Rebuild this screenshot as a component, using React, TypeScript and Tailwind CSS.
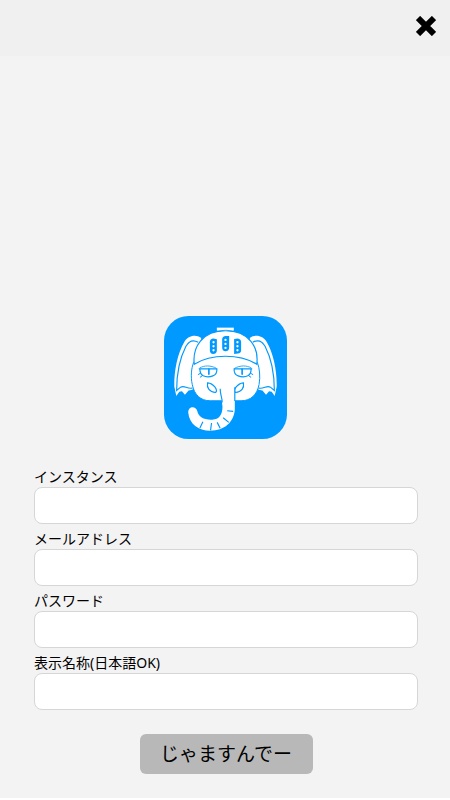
const fields = [
  { id: "instance", label: "インスタンス", type: "text" },
  { id: "email", label: "メールアドレス", type: "email" },
  { id: "password", label: "パスワード", type: "password" },
  { id: "displayName", label: "表示名称(日本語OK)", type: "text" },
];

function ElephantLogo() {
  return (
    <svg viewBox="12 12 370 370" className="w-[123px] h-[123px]" aria-hidden="true">
      <rect x="12" y="12" width="370" height="370" rx="74" fill="#0099ff" />

      {/* Ears */}
      <g id="ear">
        <path
          d="M124 78 C107 66 84 71 73 90 C53 124 42 176 43 224 L49 253 L58 240 L66 238 L75 249 L86 236 L98 234 L108 160 Z"
          fill="#fff"
        />
        <path
          d="M115 91 C99 82 87 87 78 103 C60 138 50 184 50 236 L62 226 C74 219 80 232 97 229"
          fill="none"
          stroke="#0099ff"
          strokeWidth="3.5"
        />
      </g>
      <use href="#ear" transform="translate(394 0) scale(-1 1)" />

      {/* Head */}
      <path
        d="M101 152 C94 169 92 196 97 218 C103 249 122 267 151 267 L244 267 C273 267 292 249 298 218 C302 195 300 171 293 152 L260 110 H134 Z"
        fill="#fff"
        stroke="#0099ff"
        strokeWidth="3"
      />

      {/* Helmet */}
      <path
        d="M103 157 C97 106 127 56 197 56 C267 56 298 106 291 157 C240 125 154 125 103 157 Z"
        fill="#fff"
        stroke="#0099ff"
        strokeWidth="3.5"
      />
      <path d="M171 47 H222 V56 H171 Z" fill="#fff" />
      <path d="M176 58 C189 54 205 54 218 58" fill="none" stroke="#0099ff" strokeWidth="2.5" />
      <g fill="#0099ff">
        <path d="M150 91 Q150 80 161 80 L171 82 V115 Q171 126 160 126 Q150 126 150 115 Z" />
        <path d="M187 83 Q187 72 198 72 H208 V107 Q208 118 197 118 Q187 118 187 107 Z" />
        <path d="M223 81 L234 80 Q244 81 244 92 V114 Q244 124 234 125 L223 126 Z" />
      </g>
      <g fill="#fff">
        <circle cx="161" cy="91" r="3.5" />
        <circle cx="161" cy="103" r="3.5" />
        <circle cx="161" cy="115" r="3.5" />
        <circle cx="197" cy="84" r="3.5" />
        <circle cx="197" cy="96" r="3.5" />
        <circle cx="197" cy="108" r="3.5" />
        <circle cx="233" cy="91" r="3.5" />
        <circle cx="233" cy="103" r="3.5" />
        <circle cx="233" cy="115" r="3.5" />
      </g>

      {/* Eyes and tusks */}
      <g id="eye" fill="none" stroke="#0099ff" strokeWidth="3.5" strokeLinecap="round">
        <path d="M120 168 C133 160 153 160 169 169" strokeWidth="2.5" />
        <path d="M118 171 H171 C172 183 168 189 159 192 C149 196 138 196 130 192 C123 188 120 181 120 172" />
        <path d="M147 172 V187" strokeWidth="5" />
        <path d="M122 184 L115 188 M128 191 L121 196" strokeWidth="3" />
        <path d="M143 213 C140 228 149 241 167 242 C176 237 162 214 143 213 Z" />
      </g>
      <use href="#eye" transform="translate(394 0) scale(-1 1)" />

      {/* Trunk */}
      <path
        d="M182 230 L188 286 C187 311 178 323 157 324 C132 325 116 316 112 298 C107 281 84 284 85 303 C88 337 116 357 151 357 C194 357 222 331 225 294 L225 230 Z"
        fill="#fff"
      />
      <g fill="none" stroke="#0099ff" strokeWidth="3.5">
        <path d="M181 231 C181 250 187 255 187 272" />
        <path d="M225 226 V268" />
        <path d="M202 297 L220 299 M190 318 L207 332 M172 332 L181 350 M155 334 L152 356 M129 330 L120 349" />
      </g>
    </svg>
  );
}

export default function App() {
  return (
    <div className="min-h-screen flex flex-col bg-white pb-0.5 text-black font-['Noto_Sans','Noto_Sans_CJK_JP',sans-serif]">
      <header className="h-14 flex justify-end items-start px-3 pt-3.5 bg-[#f0f0f0]">
        <button type="button" aria-label="閉じる" className="w-6 h-6 flex items-center justify-center">
          <svg viewBox="0 0 20 20" className="w-5 h-5">
            <path d="M2 2 L18 18 M18 2 L2 18" stroke="currentColor" strokeWidth="6" />
          </svg>
        </button>
      </header>

      <main className="flex-1 flex flex-col justify-end items-center bg-[#f3f3f3] pt-8 pb-6">
        <ElephantLogo />

        <form className="w-full flex flex-col items-center pt-[23px] pl-[34px] pr-8">
          {fields.map((field) => (
            <div key={field.id} className="w-full flex flex-col">
              <label htmlFor={field.id} className="pt-1 text-sm leading-[21px]">
                {field.label}
              </label>
              <input
                id={field.id}
                type={field.type}
                className="w-full h-[37px] px-3 bg-white border border-[#d6d6d6] rounded-lg"
              />
            </div>
          ))}
          <button
            type="button"
            className="mt-6 h-10 w-[173px] rounded-md bg-[#b8b8b8] text-[19px]"
          >
            じゃますんでー
          </button>
        </form>
      </main>
    </div>
  );
}
